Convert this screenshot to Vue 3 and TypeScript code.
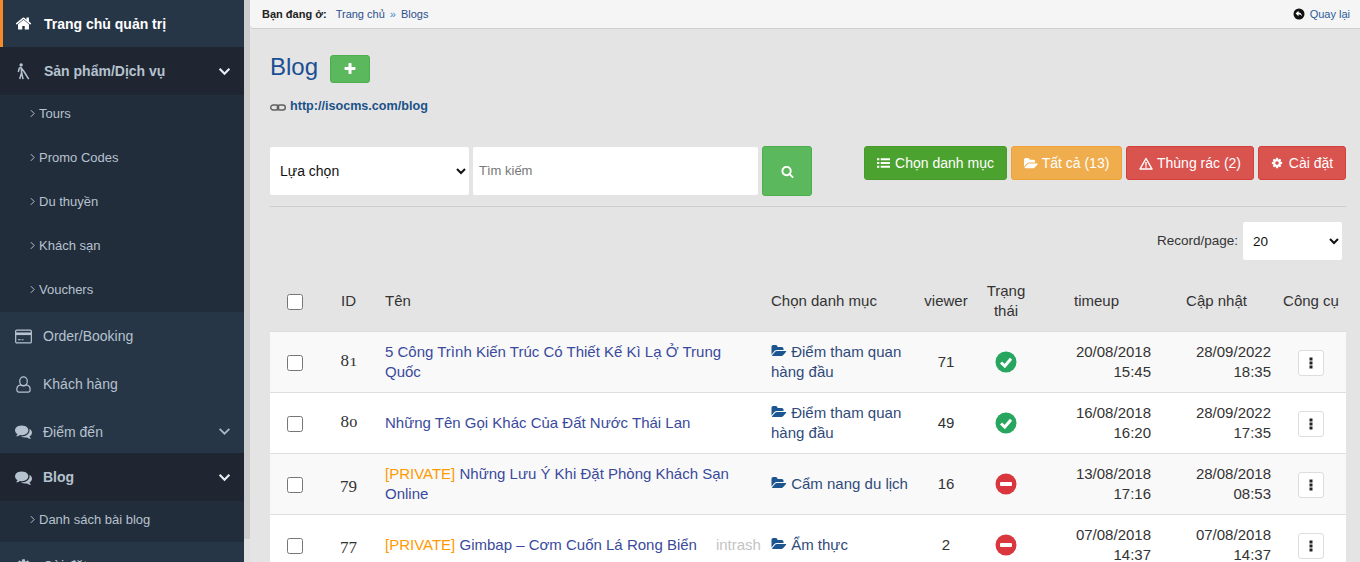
<script setup lang="ts">
type Status = "on" | "off";

interface Post {
  id: number;
  name: string;
  isPrivate: boolean;
  inTrash: boolean;
  category: string;
  viewer: number;
  status: Status;
  timeup: [string, string];
  updated: [string, string];
}

const posts: Post[] = [
  { id: 81, name: "5 Công Trình Kiến Trúc Có Thiết Kế Kì Lạ Ở Trung Quốc", isPrivate: false, inTrash: false, category: "Điểm tham quan hàng đầu", viewer: 71, status: "on", timeup: ["20/08/2018", "15:45"], updated: ["28/09/2022", "18:35"] },
  { id: 80, name: "Những Tên Gọi Khác Của Đất Nước Thái Lan", isPrivate: false, inTrash: false, category: "Điểm tham quan hàng đầu", viewer: 49, status: "on", timeup: ["16/08/2018", "16:20"], updated: ["28/09/2022", "17:35"] },
  { id: 79, name: "Những Lưu Ý Khi Đặt Phòng Khách Sạn Online", isPrivate: true, inTrash: false, category: "Cẩm nang du lịch", viewer: 16, status: "off", timeup: ["13/08/2018", "17:16"], updated: ["28/08/2018", "08:53"] },
  { id: 77, name: "Gimbap – Cơm Cuốn Lá Rong Biển", isPrivate: true, inTrash: true, category: "Ẩm thực", viewer: 2, status: "off", timeup: ["07/08/2018", "14:37"], updated: ["07/08/2018", "14:37"] },
];

const subProducts = ["Tours", "Promo Codes", "Du thuyền", "Khách sạn", "Vouchers"];

const icons = {
  home: "M1472 992v480q0 26-19 45t-45 19h-384v-384h-256v384h-384q-26 0-45-19t-19-45v-480q0-1 .5-3t.5-3l575-474 575 474q1 2 1 6zm223-69l-62 74q-8 9-21 11h-3q-13 0-21-7l-692-577-692 577q-12 8-24 7-13-2-21-11l-62-74q-8-10-7-23.5t11-21.5l719-599q32-26 76-26t76 26l244 204v-195q0-14 9-23t23-9h192q14 0 23 9t9 23v408l219 182q10 8 11 21.5t-7 23.5z",
  comments: "M1408 768q0 139-94 257t-256.500 186.500-353.500 68.500q-86 0-176-16-124 88-278 128-36 9-86 16h-3q-11 0-20.500-8t-11.500-21q-1-3-1-6.500t.5-6.500 2-6l2.500-5 3.500-5.500 4-5 4.500-5 4-4.500q5-6 23-25t26-29.500 22.500-29 25-38.500 20.500-44q-124-72-195-177t-71-224q0-139 94-257t256.500-186.500 353.500-68.500 353.500 68.500 256.500 186.500 94 257zm384 256q0 120-71 224.500t-195 176.500q10 24 20.500 44t25 38.500 22.500 29 26 29.500 23 25q1 1 4 4.500t4.500 5 4 5 3.500 5.500l2.500 5 2 6 .5 6.500-1 6.500q-3 14-13 22t-22 7q-50-7-86-16-154-40-278-128-90 16-176 16-271 0-472-132 58 4 88 4 161 0 309-45t264-129q125-92 192-212t67-254q0-77-23-152 129 71 204 178t75 230z",
  cog: "M1152 896q0-106-75-181t-181-75-181 75-75 181 75 181 181 75 181-75 75-181zm512-109v222q0 12-8 23t-20 13l-185 28q-19 54-39 91 35 50 107 138 10 12 10 25t-9 23q-27 37-99 108t-94 71q-12 0-26-9l-138-108q-44 23-91 38-16 136-29 186-7 28-36 28h-222q-14 0-24.500-8.500t-11.500-21.500l-28-184q-49-16-90-37l-141 107q-10 9-25 9-14 0-25-11-126-114-165-168-7-10-7-23 0-12 8-23 15-21 51-66.500t54-70.500q-27-50-41-99l-183-27q-13-2-21-12.500t-8-23.500v-222q0-12 8-23t19-13l186-28q14-46 39-92-40-57-107-138-10-12-10-24 0-10 9-23 26-36 98.500-107.500t94.500-71.500q13 0 26 10l138 107q44-23 91-38 16-136 29-186 7-28 36-28h222q14 0 24.500 8.500t11.500 21.500l28 184q49 16 90 37l142-107q9-9 24-9 13 0 25 10 129 119 165 170 7 8 7 22 0 12-8 23-15 21-51 66.500t-54 70.500q26 50 41 98l183 28q13 2 21 12.500t8 23.500z",
  search: "M1216 832q0-185-131.500-316.500t-316.500-131.500-316.500 131.500-131.500 316.500 131.500 316.500 316.500 131.500 316.500-131.500 131.500-316.500zm512 832q0 52-38 90t-90 38q-54 0-90-38l-343-342q-179 124-399 124-143 0-273.500-55.500t-225-150-150-225-55.500-273.500 55.500-273.500 150-225 225-150 273.500-55.500 273.500 55.500 225 150 150 225 55.500 273.500q0 220-124 399l343 343q37 37 37 90z",
  plus: "M1600 736v192q0 40-28 68t-68 28h-416v416q0 40-28 68t-68 28h-192q-40 0-68-28t-28-68v-416h-416q-40 0-68-28t-28-68v-192q0-40 28-68t68-28h416v-416q0-40 28-68t68-28h192q40 0 68 28t28 68v416h416q40 0 68 28t28 68z",
  folderOpen: "M1879 952q0 31-31 66l-336 396q-43 51-120.500 86.500t-143.500 35.500h-1088q-34 0-60.500-13t-26.500-43q0-31 31-66l336-396q43-51 120.500-86.500t143.500-35.500h1088q34 0 60.500 13t26.500 43zm-343-344v160h-832q-94 0-197 47.500t-164 119.500l-337 396-5 6q0-4-.5-12.500t-.5-12.500v-960q0-92 66-158t158-66h320q92 0 158 66t66 158v32h544q92 0 158 66t66 158z",
};

// the source font has old-style figures, so each digit gets its own height class
function digitClass(d: string): string {
  if ("012".includes(d)) return "dg-low";
  if ("34579".includes(d)) return "dg-drop";
  return "dg-high";
}
</script>

<template>
  <div class="page">
    <aside class="sidebar">
      <a class="nav-item nav-home">
        <svg class="nav-icon" viewBox="0 0 1792 1792"><path :d="icons.home" fill="currentColor" /></svg>
        <span>Trang chủ quản trị</span>
      </a>
      <a class="nav-item nav-open">
        <svg class="nav-icon" viewBox="0 0 18 18">
          <circle cx="6.5" cy="2" r="1.8" fill="currentColor" />
          <path d="M6.500 4.500 4.500 5.500 3.500 9.500M6.500 4.500 7 10M7 10 5 17M7 10 8.500 17M6.800 5.500 9.500 9M9.500 9 14.500 17" fill="none" stroke="currentColor" stroke-width="1.600" />
        </svg>
        <span>Sản phẩm/Dịch vụ</span>
        <svg class="chev chev-strong" viewBox="0 0 12 8"><polyline points="1.500,1.500 6,6 10.500,1.500" /></svg>
      </a>
      <div class="subnav subnav-products">
        <a v-for="item in subProducts" :key="item" class="sub-item">
          <svg class="angle" viewBox="0 0 6 10"><polyline points="1,1 5,5 1,9" /></svg>
          <span>{{ item }}</span>
        </a>
      </div>
      <a class="nav-item">
        <svg class="nav-icon nav-icon-card" viewBox="0 0 18 15">
          <rect x=".7" y=".7" width="16.600" height="13.600" rx="1.300" fill="none" stroke="currentColor" stroke-width="1.300" />
          <rect x="1" y="3.200" width="16" height="2.800" fill="currentColor" />
          <path d="M3 11h3M7 11h2" stroke="currentColor" stroke-width="1.100" />
        </svg>
        <span>Order/Booking</span>
      </a>
      <a class="nav-item">
        <svg class="nav-icon" viewBox="0 0 16 18">
          <ellipse cx="8" cy="5.500" rx="4" ry="4.600" fill="none" stroke="currentColor" stroke-width="1.300" />
          <path d="M4.800 9.500C2.500 10 1 11.500 1 14v1.200C1 16.200 1.800 17 2.800 17h10.400c1 0 1.800-.8 1.800-1.800V14c0-2.500-1.500-4-3.800-4.500-1.800 1.200-4.600 1.200-6.400 0z" fill="none" stroke="currentColor" stroke-width="1.300" />
        </svg>
        <span>Khách hàng</span>
      </a>
      <a class="nav-item nav-short">
        <svg class="nav-icon" viewBox="0 0 1792 1792"><path :d="icons.comments" fill="currentColor" /></svg>
        <span>Điểm đến</span>
        <svg class="chev" viewBox="0 0 12 8"><polyline points="1.500,1.500 6,6 10.500,1.500" /></svg>
      </a>
      <a class="nav-item nav-open nav-blog">
        <svg class="nav-icon" viewBox="0 0 1792 1792"><path :d="icons.comments" fill="currentColor" /></svg>
        <span>Blog</span>
        <svg class="chev chev-strong" viewBox="0 0 12 8"><polyline points="1.500,1.500 6,6 10.500,1.500" /></svg>
      </a>
      <div class="subnav subnav-blog">
        <a class="sub-item">
          <svg class="angle" viewBox="0 0 6 10"><polyline points="1,1 5,5 1,9" /></svg>
          <span>Danh sách bài blog</span>
        </a>
      </div>
      <a class="nav-item">
        <svg class="nav-icon" viewBox="0 0 1792 1792"><path :d="icons.cog" fill="currentColor" /></svg>
        <span>Cài đặt</span>
      </a>
    </aside>

    <div class="rail"><div class="rail-thumb"></div></div>

    <main class="main">
      <div class="crumbs">
        <strong class="crumbs-label">Bạn đang ở:</strong>
        <a class="crumb">Trang chủ</a>
        <span class="crumb-sep">»</span>
        <a class="crumb">Blogs</a>
        <a class="back">
          <svg class="back-icon" viewBox="0 0 12 12">
            <circle cx="6" cy="6" r="5.500" fill="#111" />
            <path d="M5.500 2.800 2.600 5.500l2.900 2.700V6.500c1.500 0 2.600.4 3.400 1.700 0-2.200-1.400-3.800-3.400-4z" fill="#fff" />
          </svg>
          Quay lại
        </a>
      </div>

      <div class="content">
        <div class="title-row">
          <h1 class="title">Blog</h1>
          <button class="btn btn-add" type="button">
            <svg class="btn-add-icon" viewBox="0 0 1792 1792"><path :d="icons.plus" fill="currentColor" /></svg>
          </button>
        </div>
        <div class="url-row">
          <svg class="chain" viewBox="0 0 16 7">
            <rect x=".7" y="1" width="8" height="5" rx="2.500" />
            <rect x="7.300" y="1" width="8" height="5" rx="2.500" />
          </svg>
          <a class="url">http://isocms.com/blog</a>
        </div>

        <div class="toolbar">
          <select class="field field-select">
            <option>Lựa chọn</option>
          </select>
          <input class="field field-input" type="text" placeholder="Tìm kiếm" />
          <button class="btn btn-search" type="button">
            <svg class="search-icon" viewBox="0 0 1792 1792"><path :d="icons.search" fill="currentColor" /></svg>
          </button>
          <div class="actions">
            <button class="btn btn-action btn-green" type="button">
              <svg class="list-icon" viewBox="0 0 14 12">
                <path d="M0 1h2.500v2H0zM4 1h10v2H4zM0 5h2.500v2H0zM4 5h10v2H4zM0 9h2.500v2H0zM4 9h10v2H4z" fill="currentColor" />
              </svg>
              Chọn danh mục
            </button>
            <button class="btn btn-action btn-orange" type="button">
              <svg class="act-icon" viewBox="0 0 1920 1792"><path :d="icons.folderOpen" fill="currentColor" /></svg>
              Tất cả (13)
            </button>
            <button class="btn btn-action btn-red" type="button">
              <svg class="act-icon" viewBox="0 0 14 13">
                <path d="M7 1.500 13 12H1z" fill="none" stroke="currentColor" stroke-width="1.500" stroke-linejoin="round" />
                <path d="M6.300 5h1.400v3.700H6.300zM6.300 9.300h1.400v1.400H6.300z" fill="currentColor" />
              </svg>
              Thùng rác (2)
            </button>
            <button class="btn btn-action btn-red btn-cog" type="button">
              <svg class="cog-icon" viewBox="0 0 1792 1792"><path :d="icons.cog" fill="currentColor" /></svg>
              Cài đặt
            </button>
          </div>
        </div>

        <div class="per-page">
          <label class="per-page-label">Record/page:</label>
          <select class="field per-page-select">
            <option>20</option>
          </select>
        </div>

        <table class="posts">
          <colgroup>
            <col class="c-check" />
            <col class="c-id" />
            <col class="c-name" />
            <col class="c-cat" />
            <col class="c-viewer" />
            <col class="c-status" />
            <col class="c-timeup" />
            <col class="c-updated" />
            <col class="c-tool" />
          </colgroup>
          <thead>
            <tr>
              <th class="center"><input class="check" type="checkbox" /></th>
              <th class="center">ID</th>
              <th>Tên</th>
              <th>Chọn danh mục</th>
              <th class="center th-tight">viewer</th>
              <th class="center">Trạng thái</th>
              <th class="center th-timeup">timeup</th>
              <th class="center th-updated">Cập nhật</th>
              <th class="center th-tool">Công cụ</th>
            </tr>
          </thead>
          <tbody>
            <tr v-for="post in posts" :key="post.id">
              <td class="center"><input class="check" type="checkbox" /></td>
              <td class="center id">
                <span v-for="(d, i) in String(post.id)" :key="i" :class="digitClass(d)">{{ d }}</span>
              </td>
              <td class="name-cell" :class="{ 'name-flat': post.inTrash }">
                <a class="name">
                  <span v-if="post.isPrivate" class="private">[PRIVATE] </span>{{ post.name }}
                </a>
                <span v-if="post.inTrash" class="trash">intrash</span>
              </td>
              <td>
                <a class="cat">
                  <svg class="cat-icon" viewBox="0 0 1920 1792"><path :d="icons.folderOpen" fill="currentColor" /></svg>
                  {{ post.category }}
                </a>
              </td>
              <td class="center">{{ post.viewer }}</td>
              <td class="center">
                <svg v-if="post.status === 'on'" class="status" viewBox="0 0 22 22">
                  <circle cx="11" cy="11" r="10.500" fill="#28a55f" />
                  <polyline points="6,11.500 9.800,15 16,7.800" fill="none" stroke="#fff" stroke-width="3" />
                </svg>
                <svg v-else class="status" viewBox="0 0 22 22">
                  <circle cx="11" cy="11" r="10.500" fill="#d9363e" />
                  <rect x="5" y="9" width="12" height="4" rx="1" fill="#fff" />
                </svg>
              </td>
              <td class="right">{{ post.timeup[0] }}<br />{{ post.timeup[1] }}</td>
              <td class="right">{{ post.updated[0] }}<br />{{ post.updated[1] }}</td>
              <td class="tool-cell">
                <button class="tool" type="button">
                  <svg class="tool-icon" viewBox="0 0 4 12">
                    <rect x=".5" y=".5" width="3" height="3" />
                    <rect x=".5" y="4.500" width="3" height="3" />
                    <rect x=".5" y="8.500" width="3" height="3" />
                  </svg>
                </button>
              </td>
            </tr>
          </tbody>
        </table>
      </div>
    </main>
  </div>
</template>

<style>
html,
body {
  margin: 0;
  height: 100%;
  overflow: hidden;
  background: #e4e4e4;
}
</style>

<style scoped>
.page {
  display: flex;
  height: 562px;
  overflow: hidden;
  font-family: "Liberation Sans", Arial, sans-serif;
  color: #333;
}

/* sidebar */
.sidebar {
  width: 244px;
  flex: none;
  background: #263646;
  color: #b6c2cf;
  font-size: 14px;
}
.nav-item {
  display: flex;
  align-items: center;
  height: 48px;
  padding: 0 13px 0 15px;
  box-sizing: border-box;
}
.nav-item > span {
  flex: 1;
  margin-left: 11px;
}
.nav-home {
  height: 47px;
  border-left: 3px solid #f58a2a;
  padding-left: 12px;
  color: #fff;
  font-weight: 700;
}
.nav-home > span {
  margin-left: 12px;
}
.nav-open {
  background: #1f2631;
  font-weight: 700;
}
.nav-open > span {
  margin-left: 12px;
}
.nav-short {
  height: 45px;
  padding-top: 2px;
}
.nav-blog > span {
  margin-left: 11px;
}
.nav-icon {
  width: 17px;
  height: 17px;
  flex: none;
}
.nav-home .nav-icon {
  color: #fff;
}
.nav-icon-card {
  height: 15px;
}
.chev {
  width: 13px;
  height: 9px;
  flex: none;
  fill: none;
  stroke: #a9b6c4;
  stroke-width: 1.600;
}
.chev-strong {
  stroke: #e8edf2;
  stroke-width: 2;
}
.subnav {
  background: #222d3b;
  font-size: 13px;
}
.subnav-products {
  height: 217px;
}
.subnav-products .sub-item {
  height: 36px;
  margin-bottom: 8px;
}
.subnav-blog {
  height: 41px;
}
.subnav-blog .sub-item {
  height: 37px;
}
.sub-item {
  display: flex;
  align-items: center;
  padding-left: 30px;
  gap: 4px;
}
.angle {
  width: 5px;
  height: 9px;
  flex: none;
  fill: none;
  stroke: currentColor;
  stroke-width: 1.200;
}

.rail {
  width: 6px;
  flex: none;
  background: #e0e0e0;
}
.rail-thumb {
  height: 539px;
  background: #cdcdcd;
}

/* main column */
.main {
  flex: 1;
  min-width: 0;
  background: #e4e4e4;
}
.crumbs {
  display: flex;
  align-items: center;
  height: 29px;
  padding: 0 10px 0 12px;
  box-sizing: border-box;
  background: #f5f5f5;
  border-bottom: 1px solid #cfcfcf;
  border-bottom-left-radius: 4px;
  font-size: 11px;
}
.crumbs-label {
  margin-right: 9px;
  color: #222;
  font-weight: 700;
}
.crumb {
  color: #2a4f8c;
}
.crumb-sep {
  margin: 0 5px;
  color: #428bca;
}
.back {
  display: flex;
  align-items: center;
  gap: 5px;
  margin-left: auto;
  color: #2a5c9c;
}
.back-icon {
  width: 12px;
  height: 12px;
}

.content {
  padding: 0 14px 0 20px;
}
.title-row {
  display: flex;
  align-items: center;
  gap: 12px;
  margin-top: 26px;
  height: 28px;
}
.title {
  margin: 0 0 4px;
  font-size: 24px;
  font-weight: 400;
  color: #1b4f93;
}
.btn {
  border: 1px solid transparent;
  border-radius: 3px;
  color: #fff;
  font-family: inherit;
  padding: 0;
}
.btn-add {
  display: flex;
  align-items: center;
  justify-content: center;
  width: 40px;
  height: 28px;
  background: #5cb85c;
  border-color: #4cae4c;
}
.btn-add-icon {
  width: 14px;
  height: 14px;
}
.url-row {
  display: flex;
  align-items: center;
  gap: 4px;
  margin-top: 14px;
  height: 18px;
}
.chain {
  width: 16px;
  height: 7px;
  fill: none;
  stroke: #5f5f5f;
  stroke-width: 1.400;
  margin-top: 3px;
}
.url {
  font-size: 12.600px;
  font-weight: 700;
  color: #1a5288;
}

.toolbar {
  display: flex;
  align-items: flex-start;
  margin-top: 31px;
  height: 60px;
  border-bottom: 1px solid #cdcdcd;
}
.field {
  background: #fff;
  border: 0;
  border-radius: 2px;
  outline: none;
  font-family: inherit;
}
.field-select {
  width: 199px;
  height: 48px;
  margin-top: 1px;
  padding-left: 6px;
  font-size: 14px;
  color: #111;
}
.field-input {
  width: 285px;
  height: 48px;
  margin: 1px 0 0 4px;
  padding: 0 6px 2px;
  box-sizing: border-box;
  font-size: 13px;
}
.field-input::placeholder {
  color: #777;
}
.btn-search {
  display: flex;
  align-items: center;
  justify-content: center;
  width: 50px;
  height: 50px;
  margin-left: 4px;
  background: #5cb85c;
  border-color: #4cae4c;
}
.search-icon {
  width: 13px;
  height: 13px;
}
.actions {
  display: flex;
  gap: 4px;
  margin-left: auto;
}
.btn-action {
  display: flex;
  align-items: center;
  justify-content: center;
  gap: 4px;
  height: 34px;
  font-size: 14px;
  white-space: nowrap;
}
.btn-green {
  width: 143px;
  gap: 5px;
  background: #4ca22f;
  border-color: #489a2c;
}
.btn-orange {
  width: 111px;
  background: #f0ad4e;
  border-color: #eea236;
}
.btn-red {
  width: 128px;
  background: #d9534f;
  border-color: #d43f3a;
}
.btn-cog {
  width: 88px;
  gap: 6px;
}
.list-icon {
  width: 13px;
  height: 12px;
}
.act-icon {
  width: 14px;
  height: 13px;
}
.cog-icon {
  width: 12px;
  height: 12px;
}

.per-page {
  display: flex;
  align-items: center;
  justify-content: flex-end;
  gap: 5px;
  height: 38px;
  margin-top: 15px;
  padding-right: 4px;
  font-size: 13.500px;
}
.per-page-label {
  margin-bottom: 2px;
}
.per-page-select {
  width: 99px;
  height: 38px;
  padding-left: 6px;
  font-size: 13.500px;
  color: #111;
}

.posts {
  width: 1076px;
  margin-top: 16px;
  table-layout: fixed;
  border-collapse: collapse;
  font-size: 15px;
  line-height: 20px;
}
.c-check { width: 50px; }
.c-id { width: 57px; }
.c-name { width: 386px; }
.c-cat { width: 153px; }
.c-viewer { width: 60px; }
.c-status { width: 60px; }
.c-timeup { width: 123px; }
.c-updated { width: 120px; }
.c-tool { width: 67px; }
th {
  height: 55px;
  padding: 0 8px 4px;
  box-sizing: border-box;
  font-weight: 400;
  text-align: left;
}
th.th-tight {
  padding: 0 0 4px;
}
th.th-timeup {
  padding-right: 10px;
}
th.th-updated {
  padding-right: 13px;
}
th.th-tool {
  padding: 0 7px 4px 4px;
}
td {
  height: 61px;
  padding: 10px 8px;
  box-sizing: border-box;
  border-top: 1px solid #dedede;
  background: #fff;
  vertical-align: middle;
}
tbody tr:nth-child(odd) td {
  background: #f9f9f9;
}
.center {
  text-align: center;
}
.right {
  text-align: right;
}
.check {
  display: block;
  width: 16px;
  height: 16px;
  margin: 2px auto 0;
}
.id {
  font-family: "Liberation Serif", serif;
  font-size: 17px;
}
.dg-low {
  display: inline-block;
  font-size: 13.500px;
  transform: scaleX(1.2);
  margin-left: 1px;
}
.dg-drop {
  position: relative;
  top: 3px;
}
.name-flat {
  white-space: nowrap;
}
.name {
  color: #3a4a9c;
}
.private {
  color: #f90;
}
.trash {
  margin-left: 19px;
  color: #c4c4c4;
}
.cat {
  color: #2f4a7a;
}
.cat-icon {
  width: 16px;
  height: 14px;
  vertical-align: -1px;
  color: #1d558f;
}
.status {
  display: block;
  width: 22px;
  height: 22px;
  margin: 0 auto;
}
.tool-cell {
  padding: 0 7px 0 4px;
  text-align: center;
}
.tool {
  display: flex;
  align-items: center;
  justify-content: center;
  width: 26px;
  height: 26px;
  margin: 2px auto 0;
  padding: 0;
  background: #fff;
  border: 1px solid #ddd;
  border-radius: 3px;
}
.tool-icon {
  width: 4px;
  height: 12px;
  fill: #222;
}
</style>
